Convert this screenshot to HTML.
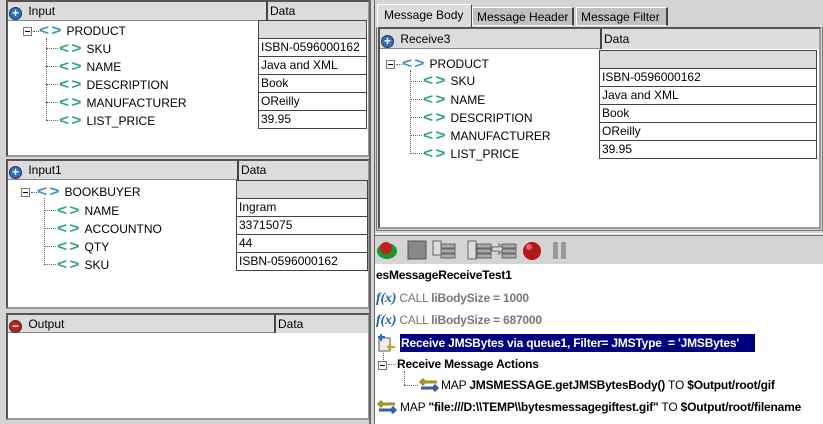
<!DOCTYPE html>
<html><head><style>
*{margin:0;padding:0;box-sizing:border-box}
body{width:823px;height:424px;background:#d4d4d4;position:relative;overflow:hidden;font-family:"Liberation Sans",sans-serif;font-size:12px;color:#000}
.a{position:absolute}
.pan{position:absolute;background:#fff;border:2px solid #555;border-right-color:#999;border-bottom-color:#999}
.hd{position:absolute;background:#dcdcdc;border-bottom:1px solid #888;height:19px;line-height:19px;white-space:nowrap}
.col{position:absolute;top:0;height:19px;border-left:2px solid #444;padding-left:2px;background:#dcdcdc}
.cell{position:absolute;border:1px solid #444;background:#fff;height:19px;line-height:17px;padding-left:2px;white-space:nowrap;overflow:hidden}
.cell.g{background:#dcdcdc}
.t{position:absolute;white-space:nowrap;line-height:14px}
.tg,.tb{display:inline-block;font-weight:bold;font-size:15px;letter-spacing:2px;line-height:12px;transform:scaleX(1.15);transform-origin:left;margin-right:6px}
.tg{color:#2aa57a}
.tb{color:#3a8fc0}
.pl{display:inline-block;width:13px;height:13px;border-radius:50%;background:#2870c8;border:1px solid #333;color:#fff;font-weight:bold;text-align:center;line-height:11px;font-size:12px;vertical-align:-2px;margin-right:3px}
.mn{background:#c02020}
.bx{position:absolute;width:9px;height:9px;border:1px solid #777;background:#fff}
.bx:after{content:"";position:absolute;left:1px;top:3px;width:5px;height:1px;background:#000}
.vl{position:absolute;border-left:1px dotted #666}
.hl{position:absolute;border-top:1px dotted #666}
.gr{color:#777}
b{font-weight:bold}
.bt{letter-spacing:-0.2px}
</style></head><body>

<div class="pan" style="left:6px;top:0;width:364px;height:157px"></div>
<div class="hd" style="left:8px;top:2px;width:360px"><span style="margin-left:1px" class="pl">+</span> Input
 <div class="col" style="left:258px;width:102px">Data</div></div>
<div class="cell g" style="left:258px;top:20px;width:109px"></div>
<div class="cell" style="left:258px;top:38px;width:109px">ISBN-0596000162</div>
<div class="cell" style="left:258px;top:56px;width:109px">Java and XML</div>
<div class="cell" style="left:258px;top:74px;width:109px">Book</div>
<div class="cell" style="left:258px;top:92px;width:109px">OReilly</div>
<div class="cell" style="left:258px;top:110px;width:109px">39.95</div>
<div class="bx" style="left:23px;top:27px"></div><div class="hl" style="left:33px;top:31px;width:6px"></div>
<div class="t" style="left:39px;top:24px"><span class="tb">&lt;&gt;</span>PRODUCT</div>
<div class="vl" style="left:46px;top:38px;height:82px"></div>
<div class="hl" style="left:46px;top:48px;width:12px"></div><div class="t" style="left:59px;top:42px"><span class="tg">&lt;&gt;</span>SKU</div>
<div class="hl" style="left:46px;top:66px;width:12px"></div><div class="t" style="left:59px;top:60px"><span class="tg">&lt;&gt;</span>NAME</div>
<div class="hl" style="left:46px;top:84px;width:12px"></div><div class="t" style="left:59px;top:78px"><span class="tg">&lt;&gt;</span>DESCRIPTION</div>
<div class="hl" style="left:46px;top:102px;width:12px"></div><div class="t" style="left:59px;top:96px"><span class="tg">&lt;&gt;</span>MANUFACTURER</div>
<div class="hl" style="left:46px;top:120px;width:12px"></div><div class="t" style="left:59px;top:114px"><span class="tg">&lt;&gt;</span>LIST_PRICE</div>

<div class="pan" style="left:6px;top:159px;width:364px;height:150px"></div>
<div class="hd" style="left:8px;top:161px;width:360px"><span style="margin-left:1px" class="pl">+</span> Input1
 <div class="col" style="left:229px;width:131px">Data</div></div>
<div class="cell g" style="left:236px;top:180px;width:132px"></div>
<div class="cell" style="left:236px;top:198px;width:132px">Ingram</div>
<div class="cell" style="left:236px;top:216px;width:132px">33715075</div>
<div class="cell" style="left:236px;top:234px;width:132px">44</div>
<div class="cell" style="left:236px;top:252px;width:132px">ISBN-0596000162</div>
<div class="bx" style="left:21px;top:188px"></div><div class="hl" style="left:31px;top:192px;width:6px"></div>
<div class="t" style="left:37px;top:185px"><span class="tb">&lt;&gt;</span>BOOKBUYER</div>
<div class="vl" style="left:44px;top:198px;height:67px"></div>
<div class="hl" style="left:44px;top:210px;width:12px"></div><div class="t" style="left:57px;top:204px"><span class="tg">&lt;&gt;</span>NAME</div>
<div class="hl" style="left:44px;top:228px;width:12px"></div><div class="t" style="left:57px;top:222px"><span class="tg">&lt;&gt;</span>ACCOUNTNO</div>
<div class="hl" style="left:44px;top:246px;width:12px"></div><div class="t" style="left:57px;top:240px"><span class="tg">&lt;&gt;</span>QTY</div>
<div class="hl" style="left:44px;top:264px;width:12px"></div><div class="t" style="left:57px;top:258px"><span class="tg">&lt;&gt;</span>SKU</div>

<div class="pan" style="left:6px;top:313px;width:364px;height:107px"></div>
<div class="hd" style="left:8px;top:315px;width:360px;height:18px;line-height:18px"><span style="margin-left:1px" class="pl mn">−</span> Output
 <div class="col" style="left:266px;width:94px;height:18px">Data</div></div>

<div class="a" style="left:369px;top:0;width:2px;height:424px;background:#666"></div>
<div class="a" style="left:374px;top:0;width:1px;height:424px;background:#666"></div>

<div class="a" style="left:377px;top:4px;width:95px;height:24px;background:#dcdcdc;border:1px solid #fff;border-right-color:#444;border-bottom:none;padding:3px 0 0 6px">Message Body</div>
<div class="a" style="left:472px;top:7px;width:102px;height:19px;background:#c0c0c0;border:1px solid #fff;border-right:2px solid #444;padding:2px 0 0 4px">Message Header</div>
<div class="a" style="left:576px;top:7px;width:92px;height:19px;background:#c0c0c0;border:1px solid #fff;border-right:2px solid #444;padding:2px 0 0 4px">Message Filter</div>
<div class="a" style="left:376px;top:27px;width:447px;height:204px;border:1px solid #777;border-top:none"></div>
<div class="pan" style="left:378px;top:27px;width:443px;height:202px;border-width:2px"></div>
<div class="hd" style="left:380px;top:29px;width:439px;height:20px;line-height:20px"><span style="margin-left:1px" class="pl">+</span> Receive3
 <div class="col" style="left:220px;width:219px;height:20px;border-left:2px solid #444">Data</div></div>
<div class="cell g" style="left:599px;top:50px;width:218px"></div>
<div class="cell" style="left:599px;top:68px;width:218px">ISBN-0596000162</div>
<div class="cell" style="left:599px;top:86px;width:218px">Java and XML</div>
<div class="cell" style="left:599px;top:104px;width:218px">Book</div>
<div class="cell" style="left:599px;top:122px;width:218px">OReilly</div>
<div class="cell" style="left:599px;top:140px;width:218px">39.95</div>
<div class="bx" style="left:386px;top:60px"></div><div class="hl" style="left:396px;top:64px;width:6px"></div>
<div class="t" style="left:402px;top:57px"><span class="tb">&lt;&gt;</span>PRODUCT</div>
<div class="vl" style="left:410px;top:70px;height:84px"></div>
<div class="hl" style="left:410px;top:81px;width:12px"></div><div class="t" style="left:423px;top:74px"><span class="tg">&lt;&gt;</span>SKU</div>
<div class="hl" style="left:410px;top:99px;width:12px"></div><div class="t" style="left:423px;top:93px"><span class="tg">&lt;&gt;</span>NAME</div>
<div class="hl" style="left:410px;top:117px;width:12px"></div><div class="t" style="left:423px;top:111px"><span class="tg">&lt;&gt;</span>DESCRIPTION</div>
<div class="hl" style="left:410px;top:135px;width:12px"></div><div class="t" style="left:423px;top:129px"><span class="tg">&lt;&gt;</span>MANUFACTURER</div>
<div class="hl" style="left:410px;top:153px;width:12px"></div><div class="t" style="left:423px;top:147px"><span class="tg">&lt;&gt;</span>LIST_PRICE</div>

<div class="a" style="left:375px;top:233px;width:448px;height:1px;background:#fff"></div>
<div class="a" style="left:375px;top:235px;width:448px;height:1px;background:#777"></div>

<svg class="a" style="left:375px;top:238px" width="200" height="24">
<ellipse cx="12" cy="13" rx="10" ry="8" fill="#1a9a2a"/><circle cx="11" cy="10" r="6" fill="#c02020"/>
<rect x="33" y="3" width="18" height="18" fill="#888" stroke="#555"/>
<g fill="#aaa" stroke="#666"><rect x="66" y="6" width="14" height="4"/><rect x="66" y="11" width="14" height="4"/><rect x="66" y="16" width="14" height="4"/><rect x="58" y="3" width="8" height="14" fill="#ddd"/></g>
<g fill="#aaa" stroke="#666"><rect x="102" y="6" width="14" height="4"/><rect x="102" y="11" width="14" height="4"/><rect x="102" y="16" width="14" height="4"/><rect x="93" y="3" width="8" height="18" fill="#ddd"/></g>
<g fill="#aaa" stroke="#666"><rect x="127" y="6" width="14" height="4"/><rect x="127" y="11" width="14" height="4"/><rect x="127" y="16" width="14" height="4"/><path d="M117 9h7v-3l4 5-4 5v-3h-7z" fill="#ddd"/></g>
<circle cx="157" cy="13" r="9" fill="#b01818"/><circle cx="154" cy="9" r="3" fill="#e66"/>
<rect x="178" y="4" width="5" height="17" fill="#999"/><rect x="186" y="4" width="5" height="17" fill="#999"/>
</svg>

<div class="a" style="left:375px;top:264px;width:448px;height:160px;background:#fff"></div>
<div class="t bt" style="left:376px;top:268px;font-weight:bold">esMessageReceiveTest1</div>
<div class="t bt" style="left:376px;top:291px"><i style="color:#2060b0;font-weight:bold;font-family:'Liberation Serif',serif;font-size:14px">f(x)</i> <span class="gr">CALL <b>liBodySize = 1000</b></span></div>
<div class="t bt" style="left:376px;top:313px"><i style="color:#2060b0;font-weight:bold;font-family:'Liberation Serif',serif;font-size:14px">f(x)</i> <span class="gr">CALL <b>liBodySize = 687000</b></span></div>
<svg class="a" style="left:377px;top:333px" width="20" height="20"><rect x="2" y="5" width="11" height="13" fill="#eee" stroke="#555"/><path d="M4 1v7M1 4h7" stroke="#2070d0" stroke-width="2"/><path d="M18 14h-7m3-3-3 3 3 3" stroke="#c8a020" stroke-width="2" fill="none"/></svg>
<div class="a" style="left:400px;top:334px;width:355px;height:18px;background:#00007f"></div>
<div class="t bt" style="left:401px;top:336px;color:#fff;font-weight:bold">Receive JMSBytes via queue1, Filter= JMSType &nbsp;= 'JMSBytes'</div>
<div class="vl" style="left:383px;top:353px;height:7px"></div>
<div class="bx" style="left:378px;top:361px"></div><div class="hl" style="left:388px;top:364px;width:8px"></div>
<div class="t bt" style="left:397px;top:357px;font-weight:bold">Receive Message Actions</div>
<div class="vl" style="left:404px;top:371px;height:14px"></div><div class="hl" style="left:404px;top:385px;width:14px"></div>
<svg class="a" style="left:418px;top:376px" width="22" height="18"><path d="M3 6h16M6 3 3 6l3 3" stroke="#a89020" stroke-width="3" fill="none"/><path d="M3 12h16M16 9l3 3-3 3" stroke="#3060b0" stroke-width="3" fill="none"/></svg>
<div class="t bt" style="left:441px;top:378px">MAP <b>JMSMESSAGE.getJMSBytesBody()</b> TO <b>$Output/root/gif</b></div>
<svg class="a" style="left:376px;top:398px" width="22" height="18"><path d="M3 6h16M6 3 3 6l3 3" stroke="#a89020" stroke-width="3" fill="none"/><path d="M3 12h16M16 9l3 3-3 3" stroke="#3060b0" stroke-width="3" fill="none"/></svg>
<div class="t bt" style="left:400px;top:400px">MAP <b>"file:///D:\\TEMP\\bytesmessagegiftest.gif"</b> TO <b>$Output/root/filename</b></div>
</body></html>
